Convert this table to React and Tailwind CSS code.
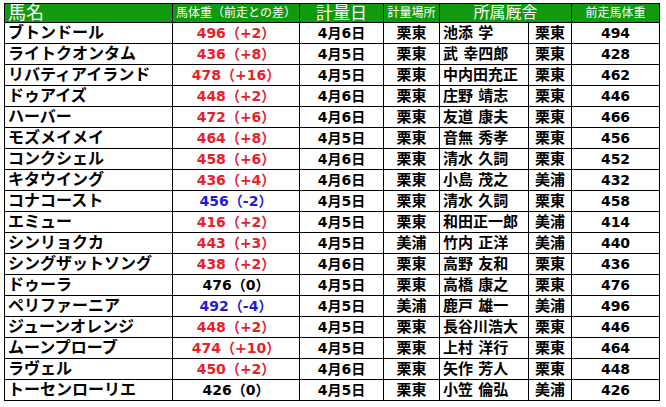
import React from 'react';

const rows = [
    ['ブトンドール', '496', '+2', 'r', '4月6日', '栗東', '池添 学', '栗東', '494'],
    ['ライトクオンタム', '436', '+8', 'r', '4月5日', '栗東', '武 幸四郎', '栗東', '428'],
    ['リバティアイランド', '478', '+16', 'r', '4月5日', '栗東', '中内田充正', '栗東', '462'],
    ['ドゥアイズ', '448', '+2', 'r', '4月6日', '栗東', '庄野 靖志', '栗東', '446'],
    ['ハーバー', '472', '+6', 'r', '4月6日', '栗東', '友道 康夫', '栗東', '466'],
    ['モズメイメイ', '464', '+8', 'r', '4月5日', '栗東', '音無 秀孝', '栗東', '456'],
    ['コンクシェル', '458', '+6', 'r', '4月6日', '栗東', '清水 久詞', '栗東', '452'],
    ['キタウイング', '436', '+4', 'r', '4月6日', '栗東', '小島 茂之', '美浦', '432'],
    ['コナコースト', '456', '-2', 'b', '4月5日', '栗東', '清水 久詞', '栗東', '458'],
    ['エミュー', '416', '+2', 'r', '4月5日', '栗東', '和田正一郎', '美浦', '414'],
    ['シンリョクカ', '443', '+3', 'r', '4月5日', '美浦', '竹内 正洋', '美浦', '440'],
    ['シングザットソング', '438', '+2', 'r', '4月6日', '栗東', '高野 友和', '栗東', '436'],
    ['ドゥーラ', '476', '0', 'k', '4月5日', '栗東', '高橋 康之', '栗東', '476'],
    ['ペリファーニア', '492', '-4', 'b', '4月5日', '美浦', '鹿戸 雄一', '美浦', '496'],
    ['ジューンオレンジ', '448', '+2', 'r', '4月5日', '栗東', '長谷川浩大', '栗東', '446'],
    ['ムーンプローブ', '474', '+10', 'r', '4月5日', '栗東', '上村 洋行', '栗東', '464'],
    ['ラヴェル', '450', '+2', 'r', '4月6日', '栗東', '矢作 芳人', '栗東', '448'],
    ['トーセンローリエ', '426', '0', 'k', '4月5日', '栗東', '小笠 倫弘', '美浦', '426'],
];

const diffColor = {
    r: 'text-[#e8202a]',
    b: 'text-[#1c1cd6]',
    k: 'text-black',
};

const App = () => {
    return (
        <div className="w-[666px] h-[407px] bg-white pt-[3px] pl-[4px] font-['DejaVu_Sans','Noto_Sans_CJK_JP',sans-serif]">
            <table className="table-fixed border-collapse w-[655px]">
                <colgroup>
                    <col className="w-[168px]" />
                    <col className="w-[127px]" />
                    <col className="w-[84px]" />
                    <col className="w-[56px]" />
                    <col className="w-[89px]" />
                    <col className="w-[43px]" />
                    <col className="w-[88px]" />
                </colgroup>
                <thead>
                    {/* header row */}
                    <tr className="h-[19px] bg-[#109a10] text-white font-normal leading-none">
                        <th className="border border-black text-left pl-[3px] text-[18px] font-normal">馬名</th>
                        <th className="border border-black text-[12px] font-normal">馬体重（前走との差）</th>
                        <th className="border border-black text-[17px] font-normal">計量日</th>
                        <th className="border border-black text-[12px] font-normal">計量場所</th>
                        <th colSpan={2} className="border border-black text-[16px] font-normal">所属厩舎</th>
                        <th className="border border-black text-[12px] font-normal">前走馬体重</th>
                    </tr>
                </thead>
                <tbody>
                    {rows.map((r, i) => (
                        <tr key={i} className="h-[21px] leading-none font-bold text-black">
                            <td className="border border-black pl-[3px] text-[16px] whitespace-nowrap">{r[0]}</td>
                            <td className={`border border-black text-center text-[14px] ${diffColor[r[3]]}`}>
                                {r[1]}（{r[2]}）
                            </td>
                            <td className="border border-black text-center text-[14px]">{r[4]}</td>
                            <td className="border border-black text-center text-[15px]">{r[5]}</td>
                            <td className="border border-black pl-[3px] text-[15px] whitespace-nowrap">{r[6]}</td>
                            <td className="border border-black text-center text-[15px]">{r[7]}</td>
                            <td className="border border-black text-center text-[14px]">{r[8]}</td>
                        </tr>
                    ))}
                </tbody>
            </table>
        </div>
    );
};

export default App;
